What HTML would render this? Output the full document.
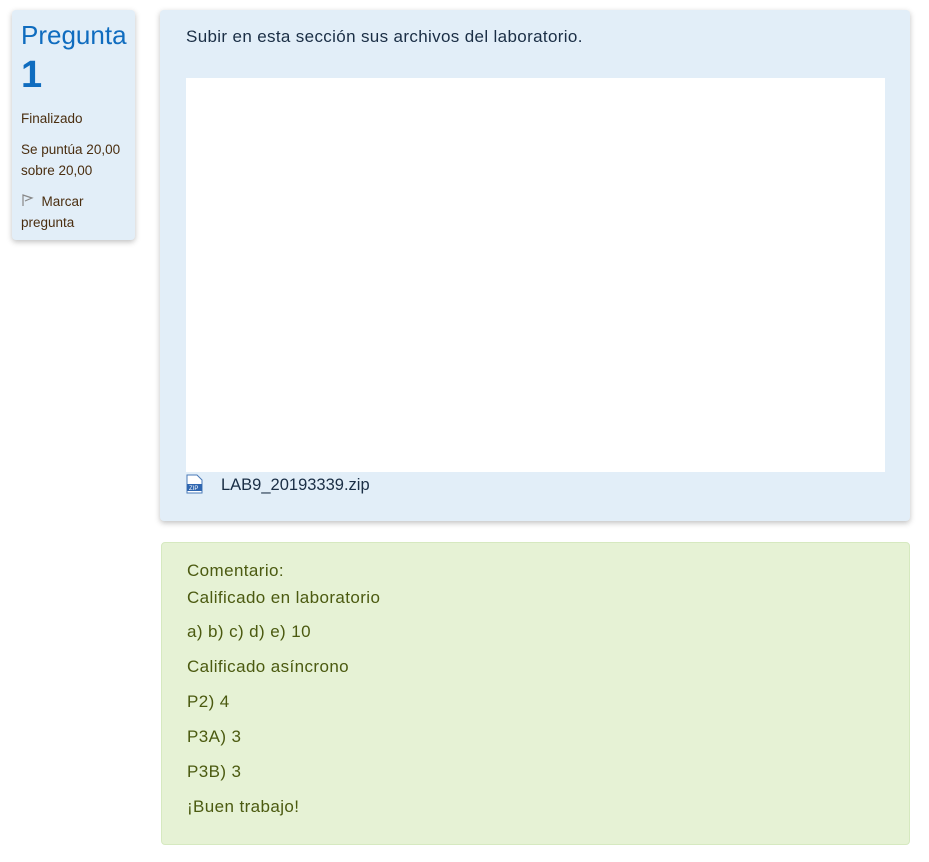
<!DOCTYPE html>
<html><head><meta charset="utf-8"><style>
body{margin:0;background:#fff;font-family:"Liberation Sans",sans-serif;width:929px;height:862px;position:relative;overflow:hidden}
.info{position:absolute;left:12px;top:10px;width:123px;height:230px;background:#e2eef8;border-radius:4px;box-shadow:0 2px 6px rgba(0,0,0,.25);box-sizing:border-box;padding:8px 9px}
.info h3{margin:0;font-weight:normal;color:#0f6cbf;font-size:26px;line-height:34px}
.info .n{font-weight:bold;font-size:38px;color:#0f6cbf;line-height:46px;margin-bottom:10px}
.info p{margin:0 0 10px;font-size:13.5px;color:#4a2e10;line-height:21px}
.main{position:absolute;left:160px;top:10px;width:750px;height:511px;background:#e2eef8;border-radius:4px;box-shadow:0 2px 6px rgba(0,0,0,.25)}
.main .q{position:absolute;left:26px;top:17px;font-size:17px;color:#1a2e45;letter-spacing:0.35px}
.white{position:absolute;left:26px;top:68px;width:699px;height:394px;background:#fff}
.file{position:absolute;left:26px;top:464px;font-size:16.5px;color:#1a2e45}
.fb{position:absolute;left:161px;top:542px;width:749px;height:303px;background:#e6f2d5;border:1px solid #d6e9c0;border-radius:4px;box-sizing:border-box;padding:15px 25px;color:#4b5a10;font-size:17px;letter-spacing:0.4px}
.fb div{line-height:31px;margin-bottom:4px}
</style></head><body>
<div class="info"><h3>Pregunta</h3><div class="n">1</div>
<p>Finalizado</p><p>Se puntúa 20,00 sobre 20,00</p>
<p><svg width="13" height="13" viewBox="0 0 13 13" style="vertical-align:-1px"><path d="M2 12V1l9 3-7 3" fill="none" stroke="#888" stroke-width="1.2"/></svg>&nbsp; Marcar pregunta</p></div>
<div class="main"><div class="q">Subir en esta sección sus archivos del laboratorio.</div>
<div class="white"></div>
<div class="file"><svg width="17" height="20" viewBox="0 0 17 20" style="vertical-align:-4px;margin-right:18px"><path d="M1 1h10l5 5v13H1z" fill="#fff" stroke="#4a7ab8"/><rect x="1" y="10" width="15" height="7" fill="#2f66b0"/><text x="3" y="16" font-size="6" fill="#fff" font-family="Liberation Sans">ZIP</text></svg>LAB9_20193339.zip</div></div>
<div class="fb"><div style="line-height:26px;margin:0">Comentario:</div><div style="line-height:28px">Calificado en laboratorio</div>
<div>a) b) c) d) e) 10</div><div>Calificado asíncrono</div><div>P2) 4</div><div>P3A) 3</div><div>P3B) 3</div><div>¡Buen trabajo!</div></div>
</body></html>
